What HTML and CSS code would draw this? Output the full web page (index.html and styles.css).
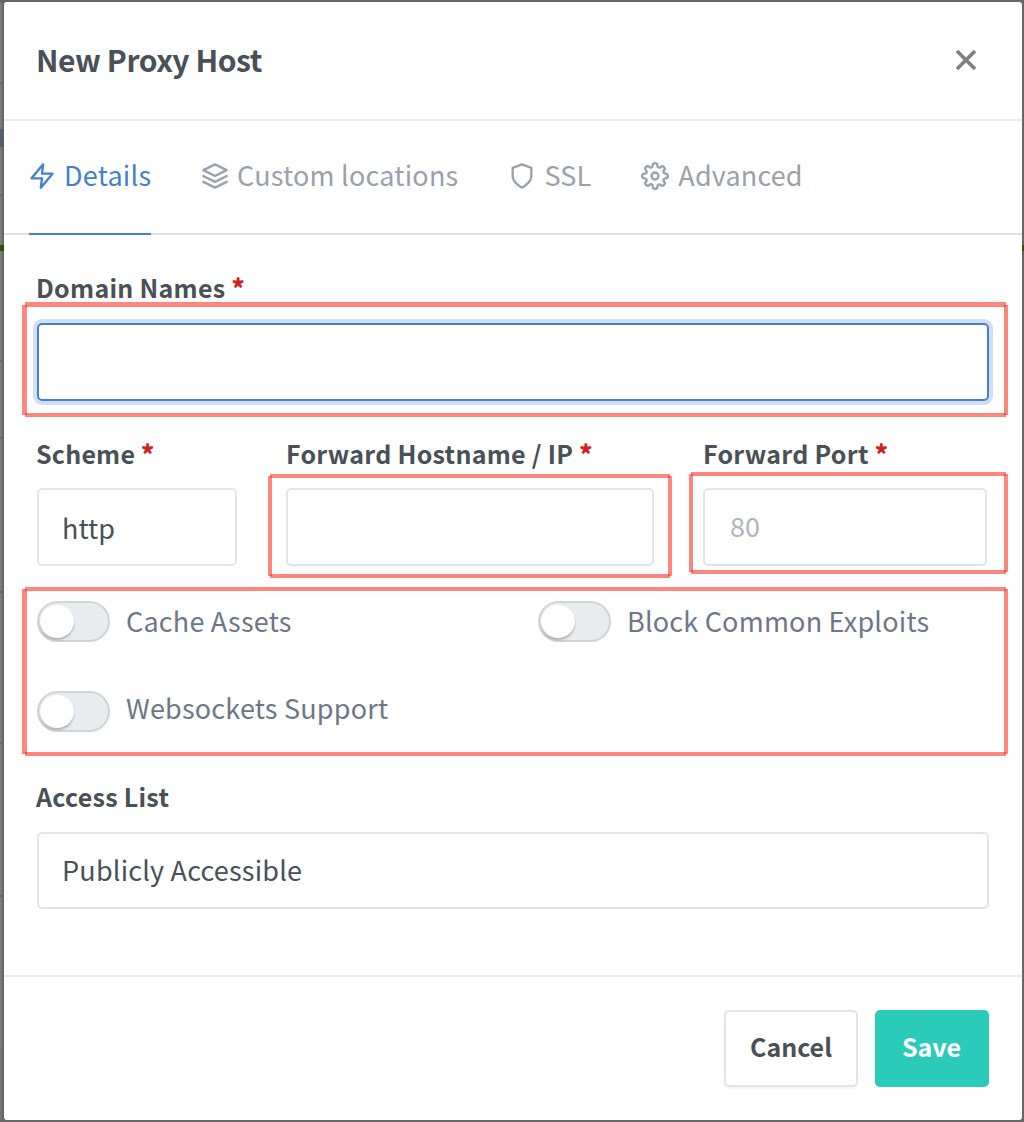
FILE: index.html
```html
<!DOCTYPE html>
<html lang="en">
<head>
<meta charset="utf-8">
<title>New Proxy Host</title>
<link rel="stylesheet" href="styles.css">
</head>
<body>
<div class="modal" role="dialog">
  <header class="modal-header">
    <h1 class="title">New Proxy Host</h1>
    <button class="close" aria-label="Close"><svg width="22" height="22" viewBox="0 0 22 22"><path d="M2 2L20 20M20 2L2 20"/></svg></button>
  </header>
  <nav class="tabs">
    <a class="tab active"><svg class="icon" viewBox="0 0 24 24"><path d="M13 2L3 14h9l-1 8 10-12h-9l1-8z"/></svg><span class="t-details">Details</span></a>
    <a class="tab"><svg class="icon" viewBox="0 0 24 24"><path d="M12 2L2 7l10 5 10-5-10-5zM2 17l10 5 10-5M2 12l10 5 10-5"/></svg><span class="t-custom">Custom locations</span></a>
    <a class="tab"><svg class="icon" viewBox="0 0 24 24"><path d="M12 22s8-4 8-10V5l-8-3-8 3v7c0 6 8 10 8 10z"/></svg><span class="t-ssl">SSL</span></a>
    <a class="tab"><svg class="icon" viewBox="0 0 24 24"><circle cx="12" cy="12" r="3"/><path d="M19.4 15a1.65 1.65 0 0 0 .33 1.82l.06.06a2 2 0 0 1-2.83 2.83l-.06-.06a1.65 1.65 0 0 0-2.8 1.17V21a2 2 0 0 1-4 0v-.09a1.65 1.65 0 0 0-2.88-1.26l-.06.06a2 2 0 0 1-2.83-2.83l.06-.06A1.65 1.65 0 0 0 3.09 14H3a2 2 0 0 1 0-4h.09a1.65 1.65 0 0 0 1.26-2.88l-.06-.06a2 2 0 0 1 2.83-2.83l.06.06A1.65 1.65 0 0 0 10 3.09V3a2 2 0 0 1 4 0v.09a1.65 1.65 0 0 0 2.82 1.26l.06-.06a2 2 0 0 1 2.83 2.83l-.06.06A1.65 1.65 0 0 0 20.91 10H21a2 2 0 0 1 0 4h-.09a1.65 1.65 0 0 0-1.51 1z"/></svg><span class="t-adv">Advanced</span></a>
  </nav>
  <main class="modal-body">
    <div class="field domain">
      <label class="label"><span>Domain Names</span> <b class="req">*</b></label>
      <div class="control focused"></div>
    </div>
    <div class="row">
      <div class="field scheme">
        <label class="label"><span>Scheme</span> <b class="req">*</b></label>
        <div class="control"><span>http</span></div>
      </div>
      <div class="field host">
        <label class="label"><span>Forward Hostname / IP</span> <b class="req">*</b></label>
        <div class="control"></div>
      </div>
      <div class="field port">
        <label class="label"><span>Forward Port</span> <b class="req">*</b></label>
        <div class="control placeholder"><span>80</span></div>
      </div>
    </div>
    <div class="switches">
      <label class="switch"><i class="track"></i><span>Cache Assets</span></label>
      <label class="switch"><i class="track"></i><span>Block Common Exploits</span></label>
      <label class="switch websockets"><i class="track"></i><span>Websockets Support</span></label>
    </div>
    <div class="field access">
      <label class="label"><span>Access List</span></label>
      <div class="control"><span>Publicly Accessible</span></div>
    </div>
  </main>
  <footer class="modal-footer">
    <button class="btn cancel"><span>Cancel</span></button>
    <button class="btn save"><span>Save</span></button>
  </footer>
</div>
<div class="mark mark-domain"></div>
<div class="mark mark-host"></div>
<div class="mark mark-port"></div>
<div class="mark mark-switches"></div>
</body>
</html>
```
FILE: styles.css
```css
* { box-sizing: border-box; }
body {
  margin: 0;
  height: 1122px;
  padding: 2px 2px 2px 4px;
  position: relative;
  overflow: hidden;
  font-family: "Noto Sans CJK SC", "Open Sans", sans-serif;
  color: #495057;
  background:
    linear-gradient(#666, #666) 0 0 / 100% 2px no-repeat,
    linear-gradient(#666, #666) 0 100% / 100% 2px no-repeat,
    linear-gradient(#2c5500, #2c5500) 0 245px / 100% 6px no-repeat,
    linear-gradient(#555c6c, #555c6c) 0 129px / 4px 18px no-repeat,
    linear-gradient(#666, #666) 2px 0 / 100% 100% no-repeat,
    linear-gradient(#6b6969, #6b6969) 0 82px / 2px 2px no-repeat,
    linear-gradient(#6b6969, #6b6969) 0 194px / 2px 2px no-repeat,
    linear-gradient(#6b6969, #6b6969) 0 360px / 2px 2px no-repeat,
    linear-gradient(#6b6969, #6b6969) 0 437px / 2px 2px no-repeat,
    linear-gradient(#6b6969, #6b6969) 0 591px / 2px 2px no-repeat,
    linear-gradient(#6b6969, #6b6969) 0 742px / 2px 2px no-repeat,
    linear-gradient(#6b6969, #6b6969) 0 895px / 2px 2px no-repeat,
    linear-gradient(#7d7b7a 1048px, #737373 1048px);
}
.modal {
  height: 1118px;
  background: #fff;
  border-radius: 3px;
  display: flex;
  flex-direction: column;
}
.modal-header {
  height: 119px;
  flex: none;
  padding: 0 45px 3px 32px;
  display: flex;
  align-items: center;
  justify-content: space-between;
  border-bottom: 2px solid #e9ecef;
}
.title { margin: 0; font-size: 30px; line-height: 36px; font-weight: 700; letter-spacing: -.42px; }
.close { border: 0; background: none; padding: 2px 0 0; display: flex; }
.close svg { stroke: #7f7f7f; stroke-width: 3.6; fill: none; }
.tabs {
  height: 114px;
  flex: none;
  display: flex;
  padding-left: 25px;
  gap: 50px;
  border-bottom: 2px solid #dee2e6;
}
.tab {
  display: flex;
  align-items: center;
  height: 114px;
  gap: 8px;
  padding-bottom: 2px;
  color: #9aa0ac;
  font-size: 27px;
  line-height: 36px;
  border-bottom: 2px solid transparent;
}
.tab span { margin-top: -2px; }
.t-details, .t-custom { letter-spacing: .22px; }
.t-details { margin-left: -1px; }
.t-ssl, .t-adv { letter-spacing: .15px; }
.t-adv { margin-left: 1px; }
.tab.active { width: 122px; color: #467fcf; border-color: #467fcf; }
.icon {
  width: 28px; height: 28px;
  flex: none;
  margin-left: -1px; margin-right: 1px;
  fill: none; stroke: currentColor; stroke-width: 2;
  stroke-linecap: round; stroke-linejoin: round;
}
.tab + .tab .icon { margin: 0; }
.modal-body { flex: none; height: 740px; padding: 35px 33px 0; }
.label { display: block; font-weight: 700; font-size: 25px; line-height: 36px; height: 53px; white-space: pre; letter-spacing: .27px; }
.domain .label, .access .label { line-height: 34px; margin-left: -1px; }
.scheme .label { margin-left: -1px; letter-spacing: .2px; }
.req { color: #cd201f; }
.control {
  height: 78px;
  border: 2px solid #e0e5ec;
  border-radius: 5px;
  padding: 0 23px;
  display: flex;
  align-items: center;
  font-size: 27px;
}
.control.focused { border-color: #467fcf; box-shadow: 0 0 0 4px #d1dff3; }
.placeholder { color: #adb5bd; padding: 0 25px 4px; }
.row { display: grid; grid-template-columns: 200px 368px 284px; gap: 49px; margin-top: 34px; }
.switches { display: grid; grid-template-columns: 501px 1fr; row-gap: 49px; margin-top: 35px; }
.switch { display: flex; align-items: center; gap: 16px; height: 41px; font-size: 27px; color: #6e7687; letter-spacing: .2px; }
.switch span { margin-top: -3px; }
.websockets span { margin-top: -8px; }
.track {
  width: 73px; height: 41px;
  border: 2px solid #ced4da;
  border-radius: 21px;
  background: #e9ecef;
  display: flex; padding: 2px 1px;
}
.track::before { content: ""; width: 34px; height: 33px; border-radius: 50%; background: #fff; box-shadow: 0 2px 2px rgba(0,0,0,.25); }
.access { margin-top: 47px; }
.access .control { height: 77px; padding-bottom: 2px; letter-spacing: .2px; }
.modal-footer {
  flex: 1;
  border-top: 2px solid #e9ecef;
  display: flex; justify-content: flex-end; align-items: flex-start;
  gap: 17px; padding: 33px 33px 0;
}
.btn {
  height: 77px;
  border-radius: 5px;
  padding: 0 0 5px;
  font: 700 25px/36px "Noto Sans CJK SC", sans-serif;
  color: #495057;
}
.cancel { width: 134px; background: #fff; border: 2px solid #e0e5ec; box-shadow: 0 2px 1px rgba(0,0,0,.04); }
.save { width: 114px; background: #2bcbba; border: 0; padding-right: 1px; color: #fff; }

/* Highlight frames: translucent bars that cross at the corners */
.mark { position: absolute; }
.mark::before, .mark::after { content: ""; position: absolute; border: 0 solid rgba(255, 13, 0, .5); }
.mark::before { inset: 0 2px 0 2px; border-width: 4px 0; }
.mark::after { inset: 2px 0; border-width: 0 4px; }
.mark-domain { left: 22px; top: 302px; width: 986px; height: 115px; }
.mark-domain::before { left: 3px; border-top-width: 5px; }
.mark-domain::after { top: 3px; border-left-width: 5px; }
.mark-host { left: 268px; top: 474px; width: 404px; height: 104px; }
.mark-port { left: 689px; top: 472px; width: 319px; height: 102px; }
.mark-switches { left: 22px; top: 587px; width: 986px; height: 169px; }
.mark-switches::before { left: 3px; }
.mark-switches::after { border-left-width: 5px; }
```
